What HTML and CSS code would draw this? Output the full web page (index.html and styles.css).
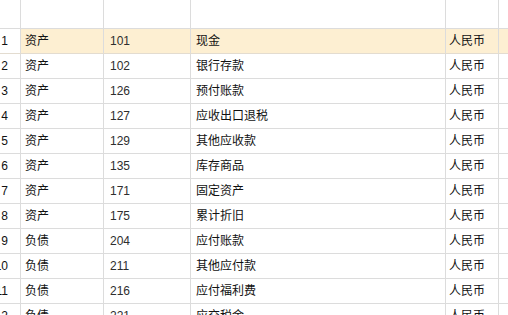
FILE: index.html
```html
<!DOCTYPE html>
<html lang="zh-CN">
<head>
<meta charset="utf-8">
<link rel="stylesheet" href="styles.css">
</head>
<body>
<div class="sheet">
  <div class="row head">
    <div class="c c0"></div><div class="c c1"></div><div class="c c2"></div><div class="c c3"></div><div class="c c4"></div><div class="c c5"></div>
  </div>
  <div class="row sel">
    <div class="c c0">1</div><div class="c c1">资产</div><div class="c c2 num">101</div><div class="c c3">现金</div><div class="c c4">人民币</div><div class="c c5"></div>
  </div>
  <div class="row">
    <div class="c c0">2</div><div class="c c1">资产</div><div class="c c2 num">102</div><div class="c c3">银行存款</div><div class="c c4">人民币</div><div class="c c5"></div>
  </div>
  <div class="row">
    <div class="c c0">3</div><div class="c c1">资产</div><div class="c c2 num">126</div><div class="c c3">预付账款</div><div class="c c4">人民币</div><div class="c c5"></div>
  </div>
  <div class="row">
    <div class="c c0">4</div><div class="c c1">资产</div><div class="c c2 num">127</div><div class="c c3">应收出口退税</div><div class="c c4">人民币</div><div class="c c5"></div>
  </div>
  <div class="row">
    <div class="c c0">5</div><div class="c c1">资产</div><div class="c c2 num">129</div><div class="c c3">其他应收款</div><div class="c c4">人民币</div><div class="c c5"></div>
  </div>
  <div class="row">
    <div class="c c0">6</div><div class="c c1">资产</div><div class="c c2 num">135</div><div class="c c3">库存商品</div><div class="c c4">人民币</div><div class="c c5"></div>
  </div>
  <div class="row">
    <div class="c c0">7</div><div class="c c1">资产</div><div class="c c2 num">171</div><div class="c c3">固定资产</div><div class="c c4">人民币</div><div class="c c5"></div>
  </div>
  <div class="row">
    <div class="c c0">8</div><div class="c c1">资产</div><div class="c c2 num">175</div><div class="c c3">累计折旧</div><div class="c c4">人民币</div><div class="c c5"></div>
  </div>
  <div class="row">
    <div class="c c0">9</div><div class="c c1">负债</div><div class="c c2 num">204</div><div class="c c3">应付账款</div><div class="c c4">人民币</div><div class="c c5"></div>
  </div>
  <div class="row">
    <div class="c c0">10</div><div class="c c1">负债</div><div class="c c2 num">211</div><div class="c c3">其他应付款</div><div class="c c4">人民币</div><div class="c c5"></div>
  </div>
  <div class="row">
    <div class="c c0">11</div><div class="c c1">负债</div><div class="c c2 num">216</div><div class="c c3">应付福利费</div><div class="c c4">人民币</div><div class="c c5"></div>
  </div>
  <div class="row">
    <div class="c c0">12</div><div class="c c1">负债</div><div class="c c2 num">221</div><div class="c c3">应交税金</div><div class="c c4">人民币</div><div class="c c5"></div>
  </div>
</div>
</body>
</html>
```
FILE: styles.css
```css
html, body {
  margin: 0;
  padding: 0;
  background: #ffffff;
  overflow: hidden;
  width: 508px;
  height: 315px;
}
.sheet {
  margin-left: -14px;
  font-family: "Liberation Sans", "Noto Sans CJK SC", sans-serif;
  font-size: 12px;
  color: #111111;
}
.row {
  display: flex;
  height: 25px;
  box-sizing: border-box;
  border-bottom: 1px solid #dcdcdc;
}
.row.head {
  height: 29px;
}
.row.sel {
  background: #fdefd2;
  border-bottom-color: #e3dcd0;
}
.c {
  flex: none;
  box-sizing: border-box;
  border-right: 1px solid #dcdcdc;
  display: flex;
  align-items: center;
  white-space: nowrap;
  overflow: hidden;
  line-height: 1;
}
.c0 { width: 35px; justify-content: flex-end; padding-right: 12px; background: #ffffff; }
.c1 { width: 83px; padding-left: 4px; }
.c2 { width: 87px; padding-left: 6px; }
.c3 { width: 255px; padding-left: 5px; }
.c4 { width: 53px; padding-left: 3px; }
.c5 { width: 60px; }
.num { color: #2e2e2e; }
```
